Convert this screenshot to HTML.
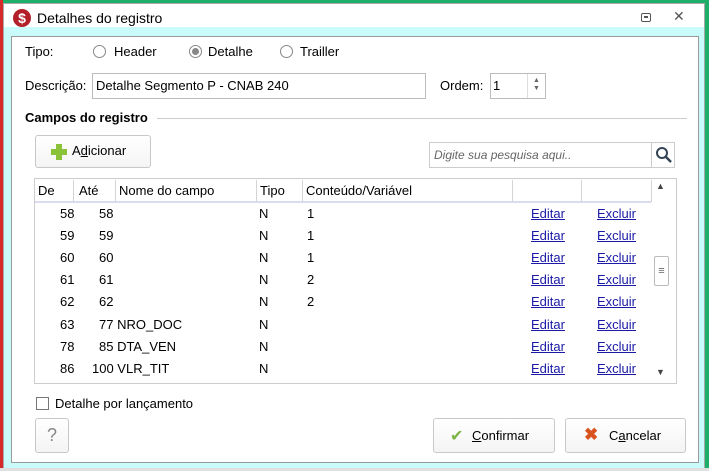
<!DOCTYPE html>
<html><head><meta charset="utf-8"><style>
*{box-sizing:border-box;margin:0;padding:0}
body{width:709px;height:471px;position:relative;overflow:hidden;background:#fff;font-family:"Liberation Sans",sans-serif;font-size:13px;color:#000}
.a{position:absolute;white-space:nowrap}
.t{font-size:13px}
.btn{position:absolute;border:1px solid #c8c8c8;border-radius:3px;background:linear-gradient(#fff,#f4f4f4)}
.radio{position:absolute;width:13px;height:13px;border:1px solid #888;border-radius:50%;background:#fff}
.lnk{color:#1a1aa6;text-decoration:underline}
.hl{position:absolute;top:180px;width:1px;height:22px;background:#d4d4d4}
</style></head><body>
<div class="a" style="left:0;top:0;width:709px;height:3px;background:#1fae6a"></div>
<div class="a" style="left:0;top:0;width:3px;height:471px;background:#d62a2a"></div>
<div class="a" style="left:705px;top:0;width:4px;height:471px;background:#1fae6a"></div>
<div class="a" style="left:3px;top:3px;width:702px;height:466px;border:1px solid #aaa;background:#c9fbfb"></div>
<div class="a" style="left:4px;top:4px;width:700px;height:23px;background:#fff"></div>
<div class="a" style="left:0;top:468px;width:709px;height:3px;background:#e0e0e0"></div>
<!-- title -->
<div class="a" style="left:13px;top:9px;width:18px;height:18px;border-radius:50%;background:#b3202a;color:#fff;font-weight:bold;font-size:14px;text-align:center;line-height:18px">$</div>
<div class="a" style="left:37px;top:9px;font-size:14px;line-height:18px">Detalhes do registro</div>
<div class="a" style="left:641px;top:13px;width:10px;height:9px;border:1px solid #555;border-radius:2px"><div style="margin:2px auto;width:4px;height:2px;border:1px solid #555"></div></div>
<div class="a" style="left:673px;top:8px;font-size:14px;color:#555">✕</div>
<!-- panel -->
<div class="a" style="left:11px;top:36px;width:688px;height:427px;background:#fff;border:1px solid #999"></div>
<div class="a t" style="left:25px;top:44px;line-height:16px">Tipo:</div>
<div class="radio" style="left:93px;top:45px"></div><div class="a t" style="left:114px;top:44px;line-height:16px">Header</div>
<div class="radio" style="left:189px;top:45px"><div style="width:7px;height:7px;margin:2px;border-radius:50%;background:#888"></div></div><div class="a t" style="left:208px;top:44px;line-height:16px">Detalhe</div>
<div class="radio" style="left:280px;top:45px"></div><div class="a t" style="left:300px;top:44px;line-height:16px">Trailler</div>
<div class="a t" style="left:25px;top:78px;line-height:16px">Descrição:</div>
<div class="a" style="left:92px;top:73px;width:334px;height:26px;border:1px solid #bbb"></div>
<div class="a t" style="left:96px;top:78px;line-height:16px">Detalhe Segmento P - CNAB 240</div>
<div class="a t" style="left:440px;top:78px;line-height:16px">Ordem:</div>
<div class="a" style="left:490px;top:73px;width:56px;height:26px;border:1px solid #bbb"></div>
<div class="a" style="left:527px;top:74px;width:1px;height:24px;background:#ddd"></div>
<div class="a" style="left:493px;top:78px;line-height:16px">1</div>
<div class="a" style="left:533px;top:77px;font-size:7px;color:#666;line-height:8px">▲<br>▼</div>
<div class="a t" style="left:25px;top:110px;font-weight:bold;line-height:16px">Campos do registro</div>
<div class="a" style="left:157px;top:118px;width:530px;height:1px;background:#ccc"></div>
<!-- add button -->
<div class="btn" style="left:35px;top:135px;width:116px;height:33px"></div>
<div class="a" style="left:51px;top:144px;width:16px;height:16px"><div style="position:absolute;left:5px;top:0;width:6px;height:16px;background:#8ac23a"></div><div style="position:absolute;left:0;top:5px;width:16px;height:6px;background:#8ac23a"></div></div>
<div class="a t" style="left:72px;top:143px;line-height:16px">A<u>d</u>icionar</div>
<!-- search -->
<div class="a" style="left:429px;top:142px;width:246px;height:26px;border:1px solid #ccc"></div>
<div class="a" style="left:651px;top:143px;width:1px;height:24px;background:#ccc"></div>
<div class="a" style="left:434px;top:147px;font-style:italic;color:#666;font-size:12px;line-height:16px">Digite sua pesquisa aqui..</div>
<svg class="a" style="left:655px;top:146px" width="18" height="18"><circle cx="7" cy="7" r="5" fill="none" stroke="#345" stroke-width="2"/><line x1="11" y1="11" x2="16" y2="16" stroke="#345" stroke-width="2.5"/></svg>
<!-- table -->
<div class="a" style="left:34px;top:178px;width:643px;height:206px;border:1px solid #ccc"></div>
<div class="a" style="left:35px;top:201px;width:616px;height:2px;background:#dcdcf0"></div>
<div class="hl" style="left:73px"></div><div class="hl" style="left:115px"></div><div class="hl" style="left:256px"></div><div class="hl" style="left:302px"></div><div class="hl" style="left:512px"></div><div class="hl" style="left:581px"></div><div class="hl" style="left:651px"></div>
<div class="a t" style="left:38px;top:183px;line-height:16px">De</div>
<div class="a t" style="left:79px;top:183px;line-height:16px">Até</div>
<div class="a t" style="left:119px;top:183px;line-height:16px">Nome do campo</div>
<div class="a t" style="left:260px;top:183px;line-height:16px">Tipo</div>
<div class="a t" style="left:306px;top:183px;line-height:16px">Conteúdo/Variável</div>
<div class="a" style="left:656px;top:181px;font-size:9px;color:#444">▲</div>
<div class="a" style="left:656px;top:367px;font-size:9px;color:#444">▼</div>
<div class="a" style="left:654px;top:256px;width:15px;height:30px;border:1px solid #bbb;border-radius:2px;text-align:center;color:#666;line-height:28px;font-size:11px">≡</div>
<div class="a t" style="left:60px;top:206px;line-height:16px">58</div><div class="a t" style="left:99px;top:206px;line-height:16px">58</div><div class="a t" style="left:259px;top:206px;line-height:16px">N</div><div class="a t" style="left:307px;top:206px;line-height:16px">1</div><div class="a t lnk" style="left:531px;top:206px;line-height:16px">Editar</div><div class="a t lnk" style="left:597px;top:206px;line-height:16px">Excluir</div>
<div class="a t" style="left:60px;top:228px;line-height:16px">59</div><div class="a t" style="left:99px;top:228px;line-height:16px">59</div><div class="a t" style="left:259px;top:228px;line-height:16px">N</div><div class="a t" style="left:307px;top:228px;line-height:16px">1</div><div class="a t lnk" style="left:531px;top:228px;line-height:16px">Editar</div><div class="a t lnk" style="left:597px;top:228px;line-height:16px">Excluir</div>
<div class="a t" style="left:60px;top:250px;line-height:16px">60</div><div class="a t" style="left:99px;top:250px;line-height:16px">60</div><div class="a t" style="left:259px;top:250px;line-height:16px">N</div><div class="a t" style="left:307px;top:250px;line-height:16px">1</div><div class="a t lnk" style="left:531px;top:250px;line-height:16px">Editar</div><div class="a t lnk" style="left:597px;top:250px;line-height:16px">Excluir</div>
<div class="a t" style="left:60px;top:272px;line-height:16px">61</div><div class="a t" style="left:99px;top:272px;line-height:16px">61</div><div class="a t" style="left:259px;top:272px;line-height:16px">N</div><div class="a t" style="left:307px;top:272px;line-height:16px">2</div><div class="a t lnk" style="left:531px;top:272px;line-height:16px">Editar</div><div class="a t lnk" style="left:597px;top:272px;line-height:16px">Excluir</div>
<div class="a t" style="left:60px;top:294px;line-height:16px">62</div><div class="a t" style="left:99px;top:294px;line-height:16px">62</div><div class="a t" style="left:259px;top:294px;line-height:16px">N</div><div class="a t" style="left:307px;top:294px;line-height:16px">2</div><div class="a t lnk" style="left:531px;top:294px;line-height:16px">Editar</div><div class="a t lnk" style="left:597px;top:294px;line-height:16px">Excluir</div>
<div class="a t" style="left:60px;top:317px;line-height:16px">63</div><div class="a t" style="left:99px;top:317px;line-height:16px">77 NRO_DOC</div><div class="a t" style="left:259px;top:317px;line-height:16px">N</div><div class="a t lnk" style="left:531px;top:317px;line-height:16px">Editar</div><div class="a t lnk" style="left:597px;top:317px;line-height:16px">Excluir</div>
<div class="a t" style="left:60px;top:339px;line-height:16px">78</div><div class="a t" style="left:99px;top:339px;line-height:16px">85 DTA_VEN</div><div class="a t" style="left:259px;top:339px;line-height:16px">N</div><div class="a t lnk" style="left:531px;top:339px;line-height:16px">Editar</div><div class="a t lnk" style="left:597px;top:339px;line-height:16px">Excluir</div>
<div class="a t" style="left:60px;top:361px;line-height:16px">86</div><div class="a t" style="left:92px;top:361px;line-height:16px">100 VLR_TIT</div><div class="a t" style="left:259px;top:361px;line-height:16px">N</div><div class="a t lnk" style="left:531px;top:361px;line-height:16px">Editar</div><div class="a t lnk" style="left:597px;top:361px;line-height:16px">Excluir</div>
<!-- bottom -->
<div class="a" style="left:36px;top:397px;width:13px;height:13px;border:1px solid #777;background:#fff"></div>
<div class="a t" style="left:55px;top:396px;line-height:16px">Detalhe por lançamento</div>
<div class="btn" style="left:35px;top:418px;width:34px;height:35px;text-align:center;font-size:18px;color:#888;line-height:33px">?</div>
<div class="btn" style="left:433px;top:418px;width:122px;height:35px"></div>
<div class="a" style="left:450px;top:426px;color:#7cb342;font-size:16px">✔</div>
<div class="a t" style="left:472px;top:428px;line-height:16px"><u>C</u>onfirmar</div>
<div class="btn" style="left:565px;top:418px;width:121px;height:35px"></div>
<div class="a" style="left:584px;top:425px;color:#d9531e;font-size:17px;font-weight:bold">✖</div>
<div class="a t" style="left:609px;top:428px;line-height:16px">C<u>a</u>ncelar</div>
</body></html>
